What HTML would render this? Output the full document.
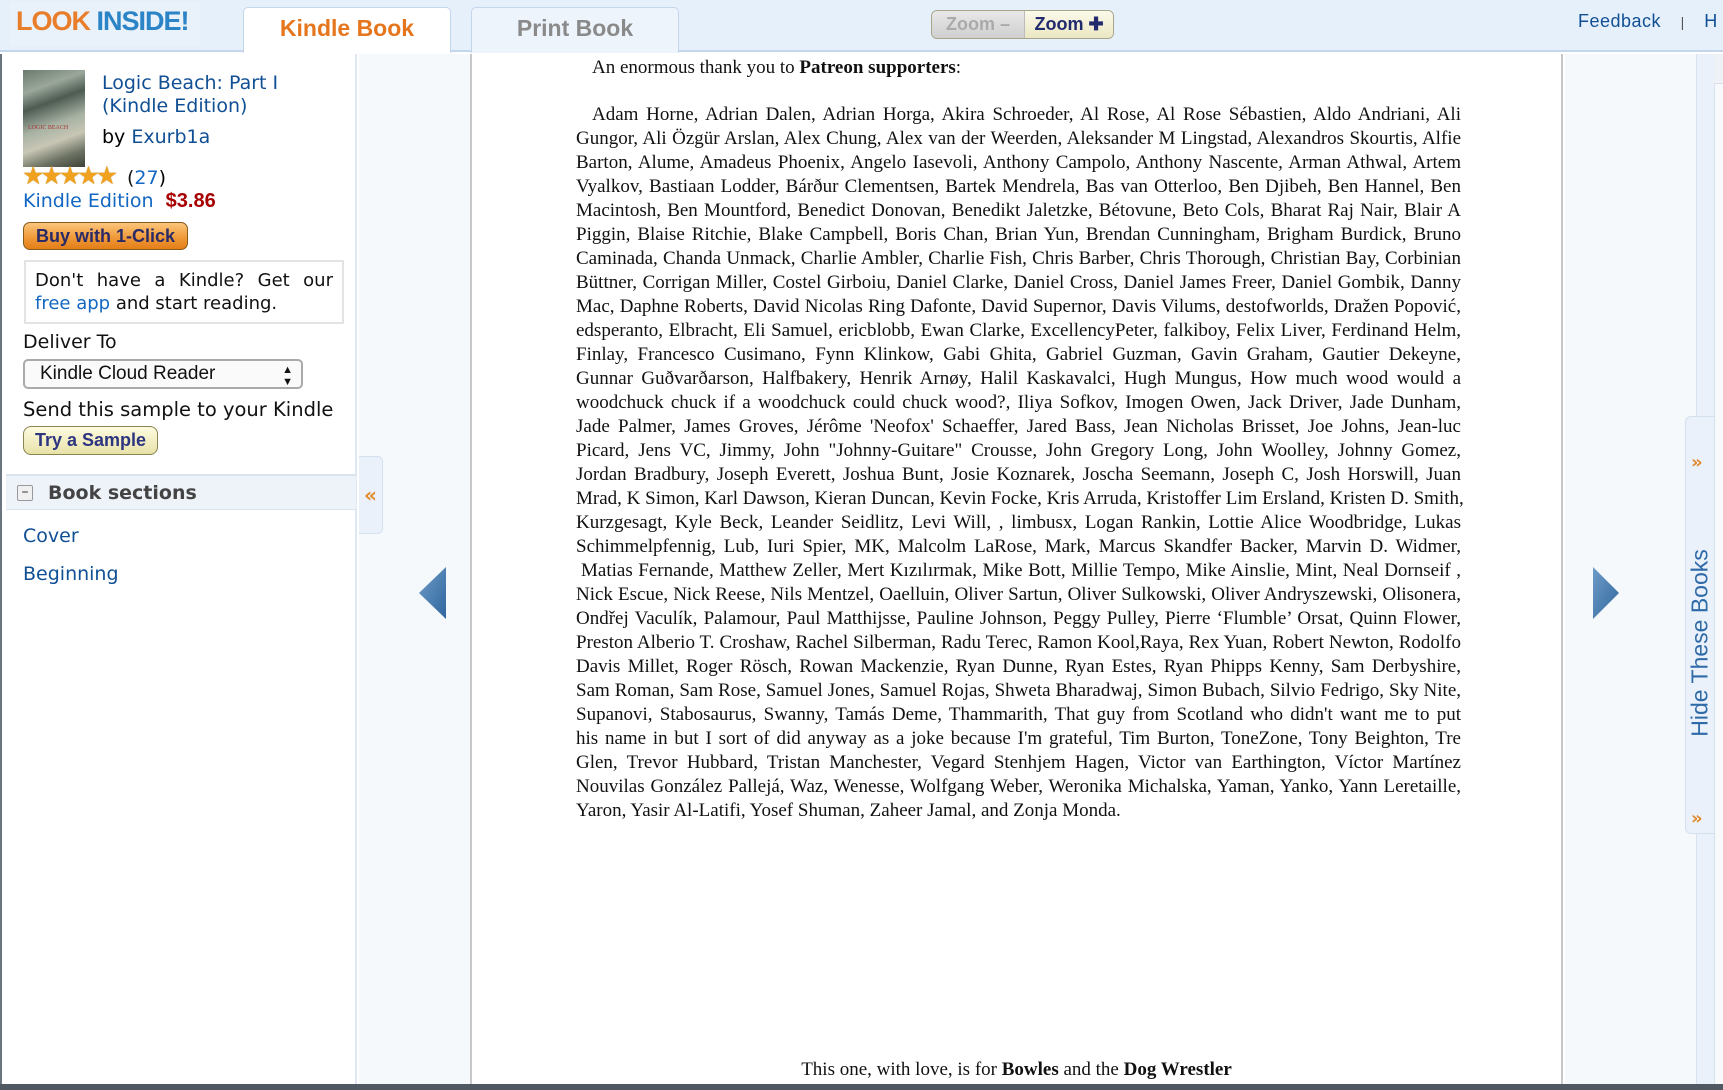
<!DOCTYPE html>
<html><head><meta charset="utf-8">
<style>
*{margin:0;padding:0;box-sizing:border-box}
body{width:1723px;height:1090px;overflow:hidden;background:#fff;font-family:"DejaVu Sans","Liberation Sans",sans-serif;position:relative}
.abs{position:absolute}
#hdr{left:0;top:0;width:1723px;height:52px;background:#e6f0fb;border-bottom:2px solid #c3d6ec}
.logo{left:16px;top:6px;font-family:"Liberation Sans",sans-serif;font-size:27px;font-weight:bold;letter-spacing:-1px}
.tab{top:7px;height:46px;background:#fff;border:1px solid #c3d6ec;border-bottom:none;border-radius:5px 5px 0 0;font-family:"Liberation Sans",sans-serif;font-weight:bold;font-size:23px;text-align:center;line-height:40px}
.zoom{top:10px;height:29px;border:1px solid #a9a58a;border-radius:6px;overflow:hidden;display:flex;font-family:"Liberation Sans",sans-serif;font-weight:bold;font-size:18px}
#left{left:2px;top:54px;width:355px;height:1030px;background:#fff;border-right:2px solid #dfe8f2}
.blue{color:#104f94}
.lnk{color:#1267c2}
#gut{left:359px;top:54px;width:111px;height:1030px;background:#f5f9fc}
#page{left:470px;top:54px;width:1093px;height:1030px;background:#fff;border-left:2px solid #c8c8c8;border-right:2px solid #c8c8c8}
#rgut{left:1565px;top:54px;width:158px;height:1030px;background:#f5f9fc}
.txt{font-family:"Liberation Serif",serif;font-size:19px;color:#111}
.ln{display:block;height:24px;line-height:24px;text-align:justify;text-align-last:justify;white-space:nowrap}
#body{left:576px;top:103px;width:885px}
</style></head><body>
<div id="hdr" class="abs"></div>
<div class="abs" style="left:10px;top:2px;width:190px;height:44px;background:#e9f1fa"></div>
<div class="abs logo"><span style="color:#e87d2a">LOOK</span> <span style="color:#2a84c6">INSIDE!</span></div>
<div class="abs tab" style="left:243px;width:208px;color:#e5761d">Kindle Book</div>
<div class="abs tab" style="left:471px;width:208px;color:#8a8a8a;background:#eef4fb">Print Book</div>
<div class="abs zoom" style="left:931px;width:183px">
 <div style="width:92px;background:linear-gradient(#e8e8e8,#cfcfcf);color:#aaa;text-align:center;line-height:27px">Zoom –</div>
 <div style="flex:1;background:linear-gradient(#fbfaea,#ebe7c3);color:#222a6e;text-align:center;line-height:27px;border-left:1px solid #bbb">Zoom ✚</div>
</div>
<div class="abs" style="left:1578px;top:11px;font-size:18px;color:#104f94;font-family:'Liberation Sans',sans-serif;letter-spacing:0.5px">Feedback <span style="color:#555;font-size:14px;margin:0 14px">|</span> H</div>

<div id="left" class="abs"></div>
<div class="abs" style="left:23px;top:70px;width:62px;height:97px;background:linear-gradient(160deg,#6b7a6e 0%,#9aa79a 20%,#4d5b52 35%,#a7b2a3 55%,#c8c6b5 70%,#6f7565 85%,#3c4038 100%)"></div>
<div class="abs" style="left:28px;top:125px;font-size:6px;color:#a33;font-family:serif">LOGIC BEACH</div>
<div class="abs blue" style="left:102px;top:72px;font-size:19px;line-height:23px">Logic Beach: Part I<br>(Kindle Edition)</div>
<div class="abs" style="left:102px;top:126px;font-size:19px">by <span class="blue">Exurb1a</span></div>
<div class="abs" style="left:22px;top:163px;font-size:25px;line-height:26px;color:#f0a21f;letter-spacing:-4px;text-shadow:0 0 1px #a86b00">★★★★★</div>
<div class="abs" style="left:127px;top:167px;font-size:19px"><span style="color:#111">(</span><span class="lnk">27</span>)</div>
<div class="abs" style="left:23px;top:190px;font-size:19px"><span class="lnk">Kindle Edition</span> <b style="color:#a80000;font-family:'Liberation Sans',sans-serif;font-size:20px;margin-left:6px">$3.86</b></div>
<div class="abs" style="left:23px;top:222px;width:165px;height:28px;border:1px solid #8a5a1a;border-radius:7px;background:linear-gradient(#fbc57c,#f09a3a 55%,#e37e17);color:#2a2a66;font-family:'Liberation Sans',sans-serif;font-weight:bold;font-size:18px;text-align:center;line-height:26px">Buy with 1-Click</div>
<div class="abs" style="left:24px;top:260px;width:320px;height:64px;border:2px solid #e4e4e4;padding:7px 9px;font-size:18px;line-height:23px;color:#111">
<div style="text-align:justify;text-align-last:justify;white-space:nowrap">Don't have a Kindle? Get our</div>
<div><span class="lnk">free app</span> and start reading.</div></div>
<div class="abs" style="left:23px;top:331px;font-size:19px;color:#111">Deliver To</div>
<div class="abs" style="left:23px;top:359px;width:280px;height:30px;border:2px solid #aaa;border-radius:5px;background:#fafafa;font-family:'Liberation Sans',sans-serif;font-size:19px;line-height:26px;padding-left:15px;color:#111">Kindle Cloud Reader<span style="position:absolute;right:8px;top:0;font-size:11px;line-height:12px;padding-top:3px">▲<br>▼</span></div>
<div class="abs" style="left:23px;top:398px;font-size:19.5px;color:#111">Send this sample to your Kindle</div>
<div class="abs" style="left:23px;top:426px;width:135px;height:29px;border:1px solid #8a8450;border-radius:8px;background:linear-gradient(#fdfbe0,#e8e2a8);color:#2e3580;font-family:'Liberation Sans',sans-serif;font-weight:bold;font-size:18px;text-align:center;line-height:27px">Try a Sample</div>
<div class="abs" style="left:6px;top:474px;width:350px;height:36px;background:#eef3f9;border-top:2px solid #d9e4ef;border-bottom:1px solid #d9e4ef"></div>
<div class="abs" style="left:17px;top:485px;width:16px;height:16px;border:1px solid #999;border-radius:2px;background:#f0f0f0;font-size:14px;line-height:12px;text-align:center;color:#333">–</div>
<div class="abs" style="left:48px;top:482px;font-size:19px;font-weight:bold;color:#444">Book sections</div>
<div class="abs blue" style="left:23px;top:525px;font-size:19px">Cover</div>
<div class="abs blue" style="left:23px;top:563px;font-size:19px">Beginning</div>

<div id="gut" class="abs"></div>
<div class="abs" style="left:359px;top:456px;width:24px;height:78px;background:#eaf1fa;border:1px solid #d3e0ee;border-left:none;border-radius:0 5px 5px 0;color:#e08a2c;font-size:20px;line-height:76px;text-align:center;font-weight:bold">«</div>
<svg class="abs" style="left:419px;top:567px" width="27" height="52"><defs><linearGradient id="g" x1="0" y1="0" x2="1" y2="1"><stop offset="0" stop-color="#6f9cc8"/><stop offset="1" stop-color="#2f669e"/></linearGradient></defs><polygon points="27,0 27,52 0,26" fill="url(#g)"/></svg>

<div id="page" class="abs"></div>
<div class="abs txt" style="left:592px;top:56px;line-height:24px">An enormous thank you to <b>Patreon supporters</b>:</div>
<div id="body" class="abs txt">
<span class="ln" style="padding-left:16px">Adam Horne, Adrian Dalen, Adrian Horga, Akira Schroeder, Al Rose, Al Rose Sébastien, Aldo Andriani, Ali</span>
<span class="ln">Gungor, Ali Özgür Arslan, Alex Chung, Alex van der Weerden, Aleksander M Lingstad, Alexandros Skourtis, Alfie</span>
<span class="ln">Barton, Alume, Amadeus Phoenix, Angelo Iasevoli, Anthony Campolo, Anthony Nascente, Arman Athwal, Artem</span>
<span class="ln">Vyalkov, Bastiaan Lodder, Bárður Clementsen, Bartek Mendrela, Bas van Otterloo, Ben Djibeh, Ben Hannel, Ben</span>
<span class="ln">Macintosh, Ben Mountford, Benedict Donovan, Benedikt Jaletzke, Bétovune, Beto Cols, Bharat Raj Nair, Blair A</span>
<span class="ln">Piggin, Blaise Ritchie, Blake Campbell, Boris Chan, Brian Yun, Brendan Cunningham, Brigham Burdick, Bruno</span>
<span class="ln">Caminada, Chanda Unmack, Charlie Ambler, Charlie Fish, Chris Barber, Chris Thorough, Christian Bay, Corbinian</span>
<span class="ln">Büttner, Corrigan Miller, Costel Girboiu, Daniel Clarke, Daniel Cross, Daniel James Freer, Daniel Gombik, Danny</span>
<span class="ln">Mac, Daphne Roberts, David Nicolas Ring Dafonte, David Supernor, Davis Vilums, destofworlds, Dražen Popović,</span>
<span class="ln">edsperanto, Elbracht, Eli Samuel, ericblobb, Ewan Clarke, ExcellencyPeter, falkiboy, Felix Liver, Ferdinand Helm,</span>
<span class="ln">Finlay, Francesco Cusimano, Fynn Klinkow, Gabi Ghita, Gabriel Guzman, Gavin Graham, Gautier Dekeyne,</span>
<span class="ln">Gunnar Guðvarðarson, Halfbakery, Henrik Arnøy, Halil Kaskavalci, Hugh Mungus, How much wood would a</span>
<span class="ln">woodchuck chuck if a woodchuck could chuck wood?, Iliya Sofkov, Imogen Owen, Jack Driver, Jade Dunham,</span>
<span class="ln">Jade Palmer, James Groves, Jérôme 'Neofox' Schaeffer, Jared Bass, Jean Nicholas Brisset, Joe Johns, Jean-luc</span>
<span class="ln">Picard, Jens VC, Jimmy, John "Johnny-Guitare" Crousse, John Gregory Long, John Woolley, Johnny Gomez,</span>
<span class="ln">Jordan Bradbury, Joseph Everett, Joshua Bunt, Josie Koznarek, Joscha Seemann, Joseph C, Josh Horswill, Juan</span>
<span class="ln">Mrad, K Simon, Karl Dawson, Kieran Duncan, Kevin Focke, Kris Arruda, Kristoffer Lim Ersland, Kristen D. Smith,</span>
<span class="ln">Kurzgesagt, Kyle Beck, Leander Seidlitz, Levi Will, , limbusx, Logan Rankin, Lottie Alice Woodbridge, Lukas</span>
<span class="ln">Schimmelpfennig, Lub, Iuri Spier, MK, Malcolm LaRose, Mark, Marcus Skandfer Backer, Marvin D. Widmer,</span>
<span class="ln" style="padding-left:5px">Matias Fernande, Matthew Zeller, Mert Kızılırmak, Mike Bott, Millie Tempo, Mike Ainslie, Mint, Neal Dornseif ,</span>
<span class="ln">Nick Escue, Nick Reese, Nils Mentzel, Oaelluin, Oliver Sartun, Oliver Sulkowski, Oliver Andryszewski, Olisonera,</span>
<span class="ln">Ondřej Vaculík, Palamour, Paul Matthijsse, Pauline Johnson, Peggy Pulley, Pierre ‘Flumble’ Orsat, Quinn Flower,</span>
<span class="ln">Preston Alberio T. Croshaw, Rachel Silberman, Radu Terec, Ramon Kool,Raya, Rex Yuan, Robert Newton, Rodolfo</span>
<span class="ln">Davis Millet, Roger Rösch, Rowan Mackenzie, Ryan Dunne, Ryan Estes, Ryan Phipps Kenny, Sam Derbyshire,</span>
<span class="ln">Sam Roman, Sam Rose, Samuel Jones, Samuel Rojas, Shweta Bharadwaj, Simon Bubach, Silvio Fedrigo, Sky Nite,</span>
<span class="ln">Supanovi, Stabosaurus, Swanny, Tamás Deme, Thammarith, That guy from Scotland who didn't want me to put</span>
<span class="ln">his name in but I sort of did anyway as a joke because I'm grateful, Tim Burton, ToneZone, Tony Beighton, Tre</span>
<span class="ln">Glen, Trevor Hubbard, Tristan Manchester, Vegard Stenhjem Hagen, Victor van Earthington, Víctor Martínez</span>
<span class="ln">Nouvilas González Pallejá, Waz, Wenesse, Wolfgang Weber, Weronika Michalska, Yaman, Yanko, Yann Leretaille,</span>
<span class="ln" style="text-align:left;text-align-last:left">Yaron, Yasir Al-Latifi, Yosef Shuman, Zaheer Jamal, and Zonja Monda.</span>
</div>
<div class="abs txt" style="left:472px;width:1089px;text-align:center;top:1058px;line-height:24px">This one, with love, is for <b>Bowles</b> and the <b>Dog Wrestler</b></div>

<div id="rgut" class="abs"></div>
<svg class="abs" style="left:1593px;top:567px" width="26" height="52"><defs><linearGradient id="g2" x1="0" y1="0" x2="1" y2="1"><stop offset="0" stop-color="#6f9cc8"/><stop offset="1" stop-color="#2f669e"/></linearGradient></defs><polygon points="0,0 26,26 0,52" fill="url(#g2)"/></svg>
<div class="abs" style="left:1696px;top:54px;width:18px;height:1030px;background:#eaf1fa;border-left:1px solid #d6e2ef"></div>
<div class="abs" style="left:1685px;top:416px;width:29px;height:418px;background:#eaf1fa;border:1px solid #d3e0ee;border-right:none;border-radius:6px 0 0 6px"></div>
<div class="abs" style="left:1691px;top:452px;color:#e08a2c;font-size:18px;font-weight:bold">»</div>
<div class="abs" style="left:1691px;top:808px;color:#e08a2c;font-size:18px;font-weight:bold">»</div>
<div class="abs" style="left:1700px;top:643px;transform:translate(-50%,-50%) rotate(-90deg);white-space:nowrap;font-family:'Liberation Sans',sans-serif;font-size:23px;color:#2e6aa8">Hide These Books</div>
<div class="abs" style="left:1714px;top:54px;width:9px;height:1030px;background:#f7f9fb;border-left:1px solid #d6e2ef"></div>
<div class="abs" style="left:1714px;top:54px;width:9px;height:30px;background:#eef2f6;border-bottom:1px solid #dde"></div>
<div class="abs" style="left:0;top:54px;width:2px;height:1030px;background:#6a7580"></div>
<div class="abs" style="left:0;top:1084px;width:1723px;height:6px;background:#4f5863"></div>
</body></html>
